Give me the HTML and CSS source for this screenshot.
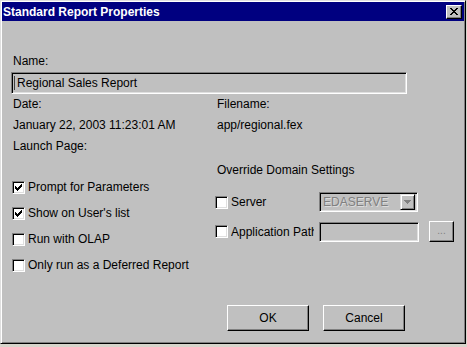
FILE: index.html
```html
<!DOCTYPE html>
<html lang="en">
  <head>
    <meta charset="UTF-8" />
    <title>Standard Report Properties</title>
    <link rel="stylesheet" href="styles.css">
  </head>
  <body>
    <div class="window">
      <div class="titlebar">
        <span class="title">Standard Report Properties</span>
        <span class="close-btn">
          <svg width="8" height="7" viewBox="0 0 8 7">
            <path d="M0 0h2v1h-2zM6 0h2v1h-2zM1 1h2v1h-2zM5 1h2v1h-2zM2 2h4v1h-4zM3 3h2v1h-2zM2 4h4v1h-4zM1 5h2v1h-2zM5 5h2v1h-2zM0 6h2v1h-2zM6 6h2v1h-2z" fill="#000"/>
          </svg>
        </span>
      </div>

      <div class="content">
        <div class="label">Name:</div>
        <div class="field name-field"><span class="caret"></span>Regional Sales Report</div>

        <div class="columns">
          <div class="col left-col">
            <div class="label row">Date:</div>
            <div class="label row">January 22, 2003 11:23:01 AM</div>
            <div class="label row">Launch Page:</div>

            <div class="options">
              <div class="check-row">
                <span class="checkbox">
                  <svg width="7" height="7" viewBox="0 0 7 7"><path d="M0 2h1v3h-1zM1 3h1v3h-1zM2 4h1v3h-1zM3 3h1v3h-1zM4 2h1v3h-1zM5 1h1v3h-1zM6 0h1v3h-1z" fill="#000"/></svg>
                </span>
                Prompt for Parameters
              </div>
              <div class="check-row">
                <span class="checkbox">
                  <svg width="7" height="7" viewBox="0 0 7 7"><path d="M0 2h1v3h-1zM1 3h1v3h-1zM2 4h1v3h-1zM3 3h1v3h-1zM4 2h1v3h-1zM5 1h1v3h-1zM6 0h1v3h-1z" fill="#000"/></svg>
                </span>
                Show on User's list
              </div>
              <div class="check-row"><span class="checkbox"></span>Run with OLAP</div>
              <div class="check-row"><span class="checkbox"></span>Only run as a Deferred Report</div>
            </div>
          </div>

          <div class="col right-col">
            <div class="label row">Filename:</div>
            <div class="label row">app/regional.fex</div>
            <div class="label override">Override Domain Settings</div>

            <div class="setting server-row">
              <span class="checkbox"></span>
              <span class="setting-name">Server</span>
              <div class="field combo">
                <span class="combo-text">EDASERVE</span>
                <span class="combo-btn">
                  <svg width="7" height="4" viewBox="0 0 7 4"><path d="M0 0h7v1h-7zM1 1h5v1h-5zM2 2h3v1h-3zM3 3h1v1h-1z" fill="#808080"/></svg>
                </span>
              </div>
            </div>

            <div class="setting path-row">
              <span class="checkbox"></span>
              <span class="setting-name">Application Path</span>
              <div class="field path-field"></div>
              <span class="browse-btn">...</span>
            </div>
          </div>
        </div>

        <div class="footer">
          <span class="btn">OK</span>
          <span class="btn">Cancel</span>
        </div>
      </div>
    </div>
  </body>
</html>
```

FILE: styles.css
```css
body {
  margin: 0;
  padding: 0;
  background-color: #d8d5cc;
  font-family: "Liberation Sans", Arial, sans-serif;
  font-size: 12px;
  color: #000;
}
.window {
  width: 466px;
  height: 344px;
  box-sizing: border-box;
  background-color: #c0c0c0;
  border-top: 1px solid #dfdfdf;
  border-left: 1px solid #dfdfdf;
  border-right: 1px solid #000;
  border-bottom: 1px solid #000;
  box-shadow: inset 1px 1px #fff, inset -1px -1px #808080;
  padding: 1px 1px 1px 1px;
}
.titlebar {
  height: 19px;
  background-color: #000080;
  display: flex;
  align-items: center;
  justify-content: space-between;
  padding: 0 2px 0 1px;
}
.title {
  color: #fff;
  font-weight: bold;
  font-size: 12px;
}
.close-btn {
  width: 16px;
  height: 14px;
  box-sizing: border-box;
  background-color: #c0c0c0;
  display: flex;
  align-items: center;
  justify-content: center;
  border-top: 1px solid #fff;
  border-left: 1px solid #fff;
  border-right: 1px solid #000;
  border-bottom: 1px solid #000;
  box-shadow: inset -1px -1px #808080;
}
.content {
  padding: 32px 0 0 10px;
}
.label {
  padding-left: 1px;
  height: 16px;
  line-height: 16px;
  white-space: nowrap;
}
.field {
  box-sizing: border-box;
  background-color: #c0c0c0;
  border-top: 1px solid #808080;
  border-left: 1px solid #808080;
  border-right: 1px solid #fff;
  border-bottom: 1px solid #fff;
  box-shadow: inset 1px 1px #000, inset -1px -1px #dfdfdf;
}
.name-field {
  margin: 3px 0 0 -1px;
  width: 396px;
  height: 22px;
  padding-left: 2px;
  display: flex;
  align-items: center;
}
.caret {
  width: 1px;
  height: 14px;
  background-color: #404040;
  margin-right: 2px;
}
.columns {
  display: flex;
}
.left-col {
  width: 203px;
}
.right-col .label {
  padding-left: 2px;
}
.row {
  height: 21px;
  line-height: 21px;
}
.options {
  margin-top: 17px;
}
.check-row {
  height: 26px;
  display: flex;
  align-items: center;
  white-space: nowrap;
}
.checkbox {
  width: 13px;
  height: 13px;
  box-sizing: border-box;
  background-color: #fff;
  border-top: 1px solid #808080;
  border-left: 1px solid #808080;
  border-right: 1px solid #fff;
  border-bottom: 1px solid #fff;
  box-shadow: inset 1px 1px #000, inset -1px -1px #dfdfdf;
  display: flex;
  align-items: center;
  justify-content: center;
  flex-shrink: 0;
  margin-right: 3px;
}
.override {
  margin-top: 24px;
  height: 20px;
  line-height: 20px;
}
.setting {
  display: flex;
  align-items: center;
}
.server-row {
  margin-top: 12px;
  height: 20px;
}
.path-row {
  margin-top: 9px;
  height: 21px;
}
.setting-name {
  width: 83px;
  overflow: hidden;
  white-space: nowrap;
  margin-right: 5px;
}
.combo {
  width: 99px;
  height: 20px;
  display: flex;
  align-items: center;
  justify-content: space-between;
  padding: 0 2px 0 3px;
}
.combo-text {
  color: #808080;
  text-shadow: 1px 1px 0 #dcdcdc;
}
.combo-btn {
  width: 15px;
  height: 16px;
  box-sizing: border-box;
  background-color: #c0c0c0;
  border-top: 1px solid #dfdfdf;
  border-left: 1px solid #dfdfdf;
  border-right: 1px solid #000;
  border-bottom: 1px solid #000;
  box-shadow: inset 1px 1px #fff, inset -1px -1px #808080;
  display: flex;
  align-items: center;
  justify-content: center;
}
.path-field {
  width: 100px;
  height: 20px;
}
.browse-btn {
  margin-left: 10px;
  width: 25px;
  height: 21px;
  box-sizing: border-box;
  background-color: #c0c0c0;
  border-top: 1px solid #fff;
  border-left: 1px solid #fff;
  border-right: 1px solid #000;
  border-bottom: 1px solid #000;
  box-shadow: inset -1px -1px #808080;
  color: #808080;
  font-size: 10px;
  text-align: center;
  line-height: 17px;
}
.footer {
  margin-top: 27px;
  padding-left: 215px;
  display: flex;
  gap: 14px;
}
.btn {
  width: 82px;
  height: 26px;
  box-sizing: border-box;
  background-color: #c0c0c0;
  border-top: 1px solid #fff;
  border-left: 1px solid #fff;
  border-right: 1px solid #000;
  border-bottom: 1px solid #000;
  box-shadow: inset -1px -1px #808080;
  display: flex;
  align-items: center;
  justify-content: center;
}
```
